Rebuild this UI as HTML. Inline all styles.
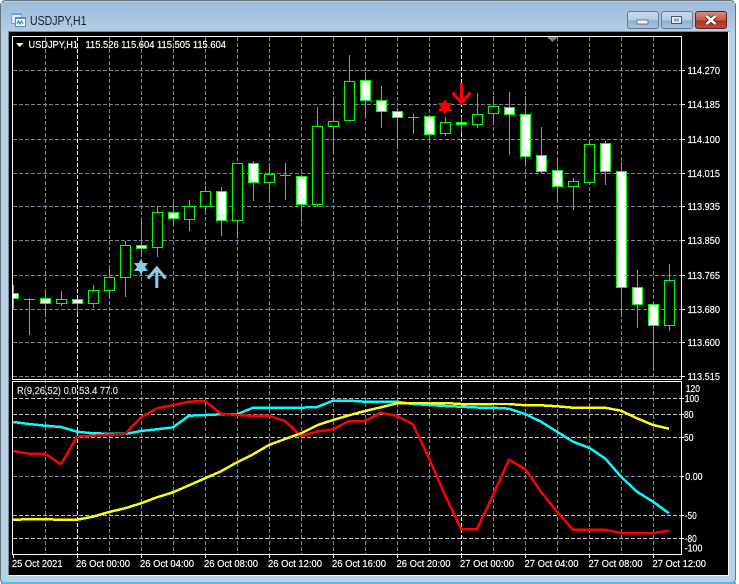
<!DOCTYPE html>
<html>
<head>
<meta charset="utf-8">
<title>USDJPY,H1</title>
<style>
html,body{margin:0;padding:0;background:#fff;width:739px;height:584px;overflow:hidden}
svg{display:block;position:absolute;left:0;top:0}
text{font-family:"Liberation Sans",sans-serif;font-size:10.5px;fill:#fff;stroke:#fff;stroke-width:.18px}
.c{shape-rendering:crispEdges}
</style>
</head>
<body>
<svg width="739" height="584" viewBox="0 0 739 584" xmlns="http://www.w3.org/2000/svg">
<defs>
<linearGradient id="tb" x1="0" y1="0" x2="0" y2="1"><stop offset="0" stop-color="#9fbbd6"/><stop offset="1" stop-color="#b5cde4"/></linearGradient>
<linearGradient id="bt" x1="0" y1="0" x2="0" y2="1"><stop offset="0" stop-color="#c9dcec"/><stop offset=".5" stop-color="#b4cbe0"/><stop offset=".55" stop-color="#8fb0cf"/><stop offset="1" stop-color="#a9c6df"/></linearGradient>
<linearGradient id="cl" x1="0" y1="0" x2="0" y2="1"><stop offset="0" stop-color="#dd8a7c"/><stop offset=".5" stop-color="#c75a48"/><stop offset=".55" stop-color="#b03018"/><stop offset="1" stop-color="#c4503a"/></linearGradient>
<clipPath id="pane"><rect x="13" y="37" width="668" height="343"/></clipPath>
</defs>

<!-- window frame -->
<rect x="0.5" y="0.5" width="735" height="583" rx="5" fill="#b8d0e8" stroke="#6a7480"/>
<rect x="1" y="2" width="734" height="30" fill="url(#tb)"/>
<rect x="1" y="582" width="735" height="2" fill="#2fcfe0" class="c"/>
<rect x="8" y="31" width="721" height="545" fill="#7f8a96" class="c"/>
<rect x="9" y="32" width="719" height="543" fill="#000" class="c"/>
<rect x="728" y="32" width="1" height="544" fill="#f4f8fc" class="c"/>
<rect x="8" y="575" width="721" height="1" fill="#f0f4f8" class="c"/>

<!-- title icon -->
<g class="c">
<rect x="11" y="13" width="11" height="11" fill="#6aa4e0"/>
<rect x="12" y="15" width="9" height="8" fill="#d8e8f8"/>
<rect x="15" y="17" width="11" height="10" fill="#4d8ed6"/>
<rect x="16" y="19" width="9" height="7" fill="#f2f8ff"/>
</g>
<path d="M17 24l1.5-3 1.5 3 1.5-3 1.5 3" fill="none" stroke="#3a6ea8" stroke-width="1"/>
<text x="30" y="25" style="font-size:12.5px;fill:#16202c;stroke:none" textLength="56.5" lengthAdjust="spacingAndGlyphs">USDJPY,H1</text>

<!-- buttons -->
<rect x="627.5" y="11.5" width="31" height="17" rx="2.5" fill="url(#bt)" stroke="#66788e"/>
<rect x="637" y="20" width="11" height="4" fill="#f2f2f2" stroke="#56616e" stroke-width=".8"/>
<rect x="661.5" y="11.5" width="31" height="17" rx="2.5" fill="url(#bt)" stroke="#66788e"/>
<rect x="671.5" y="16.5" width="10" height="7" fill="#e8eef4" stroke="#4a5666" stroke-width="1"/>
<rect x="674" y="18.5" width="5" height="3" fill="#8ba6c0"/>
<rect x="695.5" y="11.5" width="31" height="17" rx="2.5" fill="url(#cl)" stroke="#5a2030"/>
<path d="M706.5 16l9 8M715.5 16l-9 8" stroke="#4a1810" stroke-width="4.2"/>
<path d="M706.5 16l9 8M715.5 16l-9 8" stroke="#fff" stroke-width="2.6"/>

<!-- grid main -->
<g class="c" fill="none" stroke="#778899" stroke-width="1" stroke-dasharray="4 2">
<path d="M13 70.5H681M13 104.5H681M13 139.5H681M13 173.5H681M13 206.5H681M13 240.5H681M13 275.5H681M13 309.5H681M13 342.5H681M13 376.5H681"/>
<path d="M45.5 37V554M109.5 37V554M141.5 37V554M173.5 37V554M205.5 37V554M237.5 37V554M269.5 37V554M301.5 37V554M333.5 37V554M365.5 37V554M397.5 37V554M429.5 37V554M493.5 37V554M525.5 37V554M557.5 37V554M589.5 37V554M621.5 37V554M653.5 37V554"/>
<path d="M13 476.5H681"/>
</g>
<g class="c" fill="none" stroke="#c4c4c4" stroke-width="1" stroke-dasharray="4 2">
<path d="M13 398.5H681M13 414.5H681M13 437.5H681M13 515.5H681M13 538.5H681"/>
</g>
<g class="c" fill="none" stroke="#fff" stroke-width="1" stroke-dasharray="4 2">
<path d="M77.5 37V554M461.5 37V554"/>
</g>

<!-- candles -->
<g clip-path="url(#pane)" class="c">
<path fill="none" stroke="#00ff00" stroke-width="1" d="M13.5 285V310M29.5 298V335M24 299.5H35M45.5 292V315M61.5 291V306M77.5 299V314M93.5 285V308M109.5 268V299M125.5 241V297M141.5 221V257M157.5 206V257M173.5 202V224M189.5 200V231M205.5 186V212M221.5 187V236M237.5 163V237M253.5 161V201M269.5 167V203M285.5 163V200M280 175.5H291M301.5 176V222M317.5 107V207M333.5 97V153M349.5 55V122M365.5 72V117M381.5 86V128M397.5 108V147M413.5 114V134M408 117.5H419M429.5 116V140M445.5 117V136M461.5 117V133M477.5 93V128M493.5 96V122M509.5 92V155M525.5 96V165M541.5 127V173M557.5 157V201M573.5 178V210M589.5 142V183M605.5 141V185M621.5 162V317M637.5 270V328M653.5 304V371M669.5 264V331"/>
<g fill="#fff" stroke="#00ff00" stroke-width="1">
<rect x="8.5" y="293.5" width="10" height="5"/>
<rect x="40.5" y="298.5" width="10" height="5"/>
<rect x="72.5" y="299.5" width="10" height="4"/>
<rect x="136.5" y="245.5" width="10" height="3"/>
<rect x="168.5" y="212.5" width="10" height="6"/>
<rect x="216.5" y="191.5" width="10" height="29"/>
<rect x="248.5" y="163.5" width="10" height="19"/>
<rect x="296.5" y="176.5" width="10" height="28"/>
<rect x="360.5" y="80.5" width="10" height="20"/>
<rect x="376.5" y="100.5" width="10" height="11"/>
<rect x="392.5" y="111.5" width="10" height="6"/>
<rect x="424.5" y="116.5" width="10" height="18"/>
<rect x="456.5" y="122.5" width="10" height="2"/>
<rect x="504.5" y="107.5" width="10" height="7"/>
<rect x="520.5" y="114.5" width="10" height="42"/>
<rect x="536.5" y="155.5" width="10" height="16"/>
<rect x="552.5" y="170.5" width="10" height="16"/>
<rect x="600.5" y="143.5" width="10" height="28"/>
<rect x="616.5" y="171.5" width="10" height="116"/>
<rect x="632.5" y="287.5" width="10" height="17"/>
<rect x="648.5" y="304.5" width="10" height="21"/>
</g>
<g fill="#000" stroke="#00ff00" stroke-width="1">
<rect x="56.5" y="299.5" width="10" height="4"/>
<rect x="88.5" y="290.5" width="10" height="13"/>
<rect x="104.5" y="277.5" width="10" height="13"/>
<rect x="120.5" y="245.5" width="10" height="32"/>
<rect x="152.5" y="212.5" width="10" height="35"/>
<rect x="184.5" y="206.5" width="10" height="13"/>
<rect x="200.5" y="191.5" width="10" height="15"/>
<rect x="232.5" y="163.5" width="10" height="57"/>
<rect x="264.5" y="174.5" width="10" height="8"/>
<rect x="312.5" y="126.5" width="10" height="78"/>
<rect x="328.5" y="121.5" width="10" height="5"/>
<rect x="344.5" y="81.5" width="10" height="39"/>
<rect x="440.5" y="122.5" width="10" height="11"/>
<rect x="472.5" y="114.5" width="10" height="10"/>
<rect x="488.5" y="106.5" width="10" height="7"/>
<rect x="568.5" y="181.5" width="10" height="5"/>
<rect x="584.5" y="144.5" width="10" height="38"/>
<rect x="664.5" y="280.5" width="10" height="45"/>
</g>
</g>

<!-- signals -->
<polygon points="141,259 143,263 148,263 145,267 148,271 143,271 141,275 139,271 134,271 137,267 134,263 139,263" fill="#87ceeb"/>
<path d="M156.8 288V268M148 278.5L156.8 268L165.6 278.5" fill="none" stroke="#87ceeb" stroke-width="3"/>
<polygon points="445,99 447,103 452,103 449,107 452,111 447,111 445,115 443,111 438,111 441,107 438,103 443,103" fill="#ff0000"/>
<path d="M461.5 83V102M452.5 92.5L461.5 103L470.5 92.5" fill="none" stroke="#ff0000" stroke-width="3"/>
<polygon points="547,37 558,37 552.5,42" fill="#708090"/>

<!-- indicator lines -->
<g fill="none" stroke-width="2.5" class="c">
<polyline stroke="#00ffff" points="13,422 29,424 45,425.7 61,427 77,431.7 93,433.3 109,433.7 125,434 141,431 157,429.3 173,427.3 189,415.7 205,415 221,414.3 237,414.3 253,407.7 269,407.7 285,407.7 301,407.7 317,407 333,400.7 349,400.7 365,401.7 381,401.7 397,401.7 413,404 429,405 445,406 461,406.7 477,407.5 493,407.7 509,408.7 525,414 541,421.7 557,431.7 573,441.7 589,447.7 605,458.3 621,476.7 637,491.7 653,501.7 669,513.3"/>
<polyline stroke="#ff0000" points="13,451 29,453.7 45,453.7 61,464.3 77,436.7 93,435.7 109,434.7 125,434 141,417.3 157,408.3 173,405 189,401.7 205,401 221,413.7 237,415 253,415.7 269,415.7 285,421 301,436 317,431.7 333,429.3 349,421 365,421 381,412.7 397,416 413,424.3 429,458.3 445,495 461,529 477,529 493,495 509,459.7 525,469 541,491.7 557,511.7 573,529.7 589,529.7 605,529.7 621,533 637,533 653,533 669,530.7"/>
<polyline stroke="#ffff00" points="13,520 29,519 45,519 61,520 77,519.7 93,516.7 109,512 125,508.3 141,503.3 157,497.3 173,492.3 189,485.3 205,478.3 221,471.3 237,462.3 253,454.3 269,445 285,439 301,433.3 317,425.3 333,420 349,415.3 365,411 381,407.3 397,403.3 413,403 429,403 445,403 461,404 477,404.3 493,404 509,404 525,405.3 541,405.3 557,406.3 573,407.7 589,407.7 605,407.7 621,410.7 637,418.3 653,425 669,428.7"/>
</g>

<!-- frames -->
<g class="c" fill="none" stroke="#fff" stroke-width="1">
<rect x="12.5" y="36.5" width="669" height="343"/>
<rect x="12.5" y="381.5" width="669" height="173"/>
<path d="M682 70.5H685M682 104.5H685M682 139.5H685M682 173.5H685M682 206.5H685M682 240.5H685M682 275.5H685M682 309.5H685M682 342.5H685M682 376.5H685"/>
<path d="M682 398.5H684M682 414.5H684M682 437.5H684M682 476.5H684M682 515.5H684M682 538.5H684"/>
<path d="M13.5 555V558M77.5 555V558M141.5 555V558M205.5 555V558M269.5 555V558M333.5 555V558M397.5 555V558M461.5 555V558M525.5 555V558M589.5 555V558M653.5 555V558"/>
</g>

<!-- header -->
<polygon points="16,43 23.5,43 19.7,47" fill="#fff"/>
<text x="28.5" y="48" textLength="49.5" lengthAdjust="spacingAndGlyphs">USDJPY,H1</text>
<text x="85.5" y="48" textLength="140.5" lengthAdjust="spacingAndGlyphs">115.526 115.604 115.505 115.604</text>
<text x="17" y="394" style="fill:#e0e0e0;stroke:#e0e0e0" textLength="101" lengthAdjust="spacingAndGlyphs">R(9,26,52) 0.0 53.4 77.0</text>

<!-- price axis -->
<text x="687.5" y="74" textLength="32.5" lengthAdjust="spacingAndGlyphs">114.270</text>
<text x="687.5" y="108" textLength="32.5" lengthAdjust="spacingAndGlyphs">114.185</text>
<text x="687.5" y="143" textLength="32.5" lengthAdjust="spacingAndGlyphs">114.100</text>
<text x="687.5" y="177" textLength="32.5" lengthAdjust="spacingAndGlyphs">114.015</text>
<text x="687.5" y="210" textLength="32.5" lengthAdjust="spacingAndGlyphs">113.935</text>
<text x="687.5" y="244" textLength="32.5" lengthAdjust="spacingAndGlyphs">113.850</text>
<text x="687.5" y="279" textLength="32.5" lengthAdjust="spacingAndGlyphs">113.765</text>
<text x="687.5" y="313" textLength="32.5" lengthAdjust="spacingAndGlyphs">113.680</text>
<text x="687.5" y="346" textLength="32.5" lengthAdjust="spacingAndGlyphs">113.600</text>
<text x="687.5" y="380" textLength="32.5" lengthAdjust="spacingAndGlyphs">113.515</text>

<!-- indicator axis -->
<text x="685.7" y="392" textLength="14.3" lengthAdjust="spacingAndGlyphs">120</text>
<text x="684.7" y="402" textLength="14.3" lengthAdjust="spacingAndGlyphs">100</text>
<text x="684" y="418" textLength="9.5" lengthAdjust="spacingAndGlyphs">80</text>
<text x="684" y="441" textLength="9.5" lengthAdjust="spacingAndGlyphs">50</text>
<text x="685.3" y="480" textLength="17.3" lengthAdjust="spacingAndGlyphs">0.00</text>
<text x="684.7" y="519" textLength="12" lengthAdjust="spacingAndGlyphs">-50</text>
<text x="684.7" y="542" textLength="12" lengthAdjust="spacingAndGlyphs">-80</text>
<text x="684.7" y="551.5" textLength="17.7" lengthAdjust="spacingAndGlyphs">-100</text>

<!-- time axis -->
<text x="12" y="567" textLength="50.5" lengthAdjust="spacingAndGlyphs">25 Oct 2021</text>
<text x="76" y="567" textLength="54" lengthAdjust="spacingAndGlyphs">26 Oct 00:00</text>
<text x="140" y="567" textLength="54" lengthAdjust="spacingAndGlyphs">26 Oct 04:00</text>
<text x="204" y="567" textLength="54" lengthAdjust="spacingAndGlyphs">26 Oct 08:00</text>
<text x="268" y="567" textLength="54" lengthAdjust="spacingAndGlyphs">26 Oct 12:00</text>
<text x="332" y="567" textLength="54" lengthAdjust="spacingAndGlyphs">26 Oct 16:00</text>
<text x="396.5" y="567" textLength="54" lengthAdjust="spacingAndGlyphs">26 Oct 20:00</text>
<text x="460" y="567" textLength="54" lengthAdjust="spacingAndGlyphs">27 Oct 00:00</text>
<text x="524.5" y="567" textLength="54" lengthAdjust="spacingAndGlyphs">27 Oct 04:00</text>
<text x="588.5" y="567" textLength="54" lengthAdjust="spacingAndGlyphs">27 Oct 08:00</text>
<text x="652.5" y="567" textLength="53.5" lengthAdjust="spacingAndGlyphs">27 Oct 12:00</text>
</svg>
</body>
</html>
